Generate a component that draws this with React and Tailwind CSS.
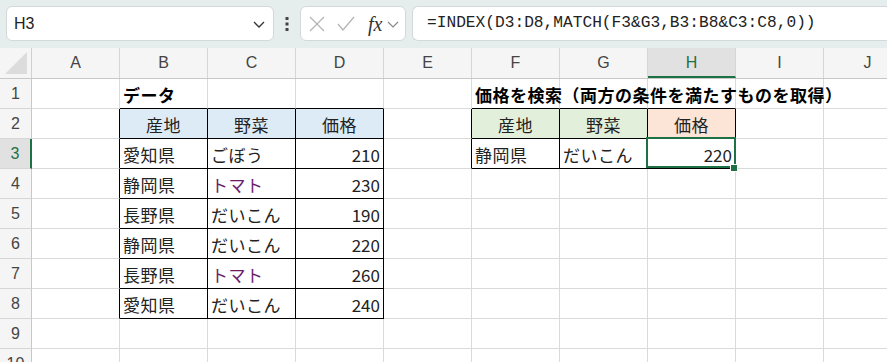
// Excel-style sheet: formula bar, column/row headers and two small tables
import React from 'react';

const COLS = ['A', 'B', 'C', 'D', 'E', 'F', 'G', 'H', 'I', 'J'];
const jp = { fontFamily: '"Noto Sans CJK JP", "Noto Sans", sans-serif' };
const ui = { fontFamily: '"Liberation Sans", Arial, sans-serif' };

const data = [
  ['愛知県', 'ごぼう', '210'],
  ['静岡県', 'トマト', '230'],
  ['長野県', 'だいこん', '190'],
  ['静岡県', 'だいこん', '220'],
  ['長野県', 'トマト', '260'],
  ['愛知県', 'だいこん', '240'],
];

// cell contents keyed "B3" etc.
const cells = {
  B1: { text: 'データ', bold: true },
  F1: { text: '価格を検索（両方の条件を満たすものを取得）', bold: true },
  B2: { text: '産地', bg: 'bg-[#ddebf7]', center: true },
  C2: { text: '野菜', bg: 'bg-[#ddebf7]', center: true },
  D2: { text: '価格', bg: 'bg-[#ddebf7]', center: true },
  F2: { text: '産地', bg: 'bg-[#e2efda]', center: true },
  G2: { text: '野菜', bg: 'bg-[#e2efda]', center: true },
  H2: { text: '価格', bg: 'bg-[#fce4d6]', center: true },
  F3: { text: '静岡県' },
  G3: { text: 'だいこん' },
  H3: { text: '220', right: true, active: true },
};
data.forEach((row, i) => {
  const r = i + 3;
  cells['B' + r] = { text: row[0] };
  cells['C' + r] = { text: row[1], purple: row[1] === 'トマト' };
  cells['D' + r] = { text: row[2], right: true };
});

const inT1 = (c, r) => ['B', 'C', 'D'].includes(c) && r >= 2 && r <= 8;
const inT2 = (c, r) => ['F', 'G', 'H'].includes(c) && r >= 2 && r <= 3;

function Cell({ col, row }) {
  const cell = cells[col + row];
  const rightBlack =
    inT1(col, row) || inT2(col, row) || (col === 'A' && row >= 2 && row <= 8) || (col === 'E' && row >= 2 && row <= 3);
  const bottomBlack =
    inT1(col, row) || inT2(col, row) || (['B', 'C', 'D', 'F', 'G', 'H'].includes(col) && row === 1);
  return (
    <div
      className={`relative box-border w-[88px] h-[30px] shrink-0 border-r border-b flex items-center ${
        rightBlack ? 'border-r-black' : 'border-r-[#dadada]'
      } ${bottomBlack ? 'border-b-black' : 'border-b-[#dadada]'} ${cell?.bg ?? ''}`}
    >
      {cell && (
        <span
          style={jp}
          className={`relative z-10 whitespace-nowrap text-[17px] tracking-[0.5px] leading-none px-[3px] pt-[1px] ${
            cell.bold ? 'font-bold text-black' : cell.purple ? 'text-[#6a1b6a]' : 'text-[#222]'
          } ${cell.center ? 'w-full text-center' : ''} ${cell.right ? 'w-full text-right tracking-[0px]' : ''}`}
        >
          {cell.text}
        </span>
      )}
      {cell?.active && (
        <>
          <div className="absolute z-20 -left-[2px] -top-[2px] w-[90px] h-[31px] border-2 border-[#1e7145] pointer-events-none" />
          <div className="absolute z-20 -right-[3px] -bottom-[4px] w-[6px] h-[6px] bg-[#1e7145] border border-white box-content" />
        </>
      )}
    </div>
  );
}

function FormulaBar() {
  return (
    <div className="h-[48px] bg-[#e6eded] flex items-start pt-[6px] pl-[6px]">
      <div className="w-[268px] h-[35px] bg-white border border-[#d4d8d8] rounded-[6px] flex items-center justify-between px-[7px]">
        <span style={ui} className="text-[16px] text-[#222]">H3</span>
        <svg width="14" height="14" viewBox="0 0 14 14" fill="none" stroke="#333" strokeWidth="1.3">
          <path d="M2 5 L7 10 L12 5" />
        </svg>
      </div>
      <div className="w-[26px] h-[35px] flex items-center justify-center">
        <svg width="4" height="16" viewBox="0 0 4 16" fill="#444">
          <rect x="0.5" y="1" width="3" height="3" />
          <rect x="0.5" y="6.5" width="3" height="3" />
          <rect x="0.5" y="12" width="3" height="3" />
        </svg>
      </div>
      <div className="w-[106px] h-[35px] bg-white border border-[#d4d8d8] rounded-[6px] flex items-center pl-[7px]">
        <svg width="18" height="18" viewBox="0 0 18 18" fill="none" stroke="#b5b5b5" strokeWidth="1.3">
          <path d="M2 2 L16 16 M16 2 L2 16" />
        </svg>
        <svg className="ml-[10px]" width="20" height="18" viewBox="0 0 20 18" fill="none" stroke="#b5b5b5" strokeWidth="1.3">
          <path d="M2 9 L7 15 L18 2" />
        </svg>
        <span
          className="ml-[12px] text-[20px] italic text-[#333] leading-none"
          style={{ fontFamily: '"Liberation Serif", "Times New Roman", serif' }}
        >
          fx
        </span>
        <svg className="ml-[5px]" width="12" height="12" viewBox="0 0 12 12" fill="none" stroke="#888" strokeWidth="1.2">
          <path d="M1 4 L6 9 L11 4" />
        </svg>
      </div>
      <div className="ml-[6px] flex-1 h-[35px] bg-white border border-[#d4d8d8] border-r-0 rounded-l-[6px] flex items-center pl-[14px]">
        <span
          className="text-[16.2px] text-[#222] whitespace-nowrap"
          style={{ fontFamily: '"Liberation Mono", "DejaVu Sans Mono", monospace' }}
        >
          =INDEX(D3:D8,MATCH(F3&amp;G3,B3:B8&amp;C3:C8,0))
        </span>
      </div>
    </div>
  );
}

export default function App() {
  const rows = [1, 2, 3, 4, 5, 6, 7, 8, 9, 10];
  return (
    <div className="w-[887px] h-[362px] overflow-hidden bg-white">
      <FormulaBar />
      {/* column headers */}
      <div className="flex h-[31px] bg-[#f5f5f5] border-b border-[#c8c8c8] box-border">
        <div className="w-[32px] shrink-0 border-r border-[#d0d0d0] relative">
          <svg className="absolute right-[4px] bottom-[4px]" width="22" height="22" viewBox="0 0 22 22">
            <path d="M22 0 L22 22 L0 22 Z" fill="#dcdcdc" />
          </svg>
        </div>
        {COLS.map((c) => (
          <div
            key={c}
            style={ui}
            className={`w-[88px] shrink-0 box-border border-r border-[#d6d6d6] flex items-center justify-center text-[16px] ${
              c === 'H' ? 'bg-[#e1e1e1] text-[#1e7145] border-b-2 border-b-[#1e7145] pt-[2px]' : 'text-[#444]'
            }`}
          >
            {c}
          </div>
        ))}
      </div>
      {rows.map((r) => (
        <div key={r} className="flex">
          <div
            style={ui}
            className={`w-[32px] h-[30px] shrink-0 box-border border-b border-[#d6d6d6] flex items-center justify-center text-[16px] ${
              r === 3
                ? 'bg-[#e1e1e1] text-[#1e7145] border-r-2 border-r-[#1e7145]'
                : 'bg-[#f5f5f5] text-[#444] border-r border-r-[#c8c8c8]'
            }`}
          >
            {r}
          </div>
          {COLS.map((c) => (
            <Cell key={c} col={c} row={r} />
          ))}
        </div>
      ))}
    </div>
  );
}
